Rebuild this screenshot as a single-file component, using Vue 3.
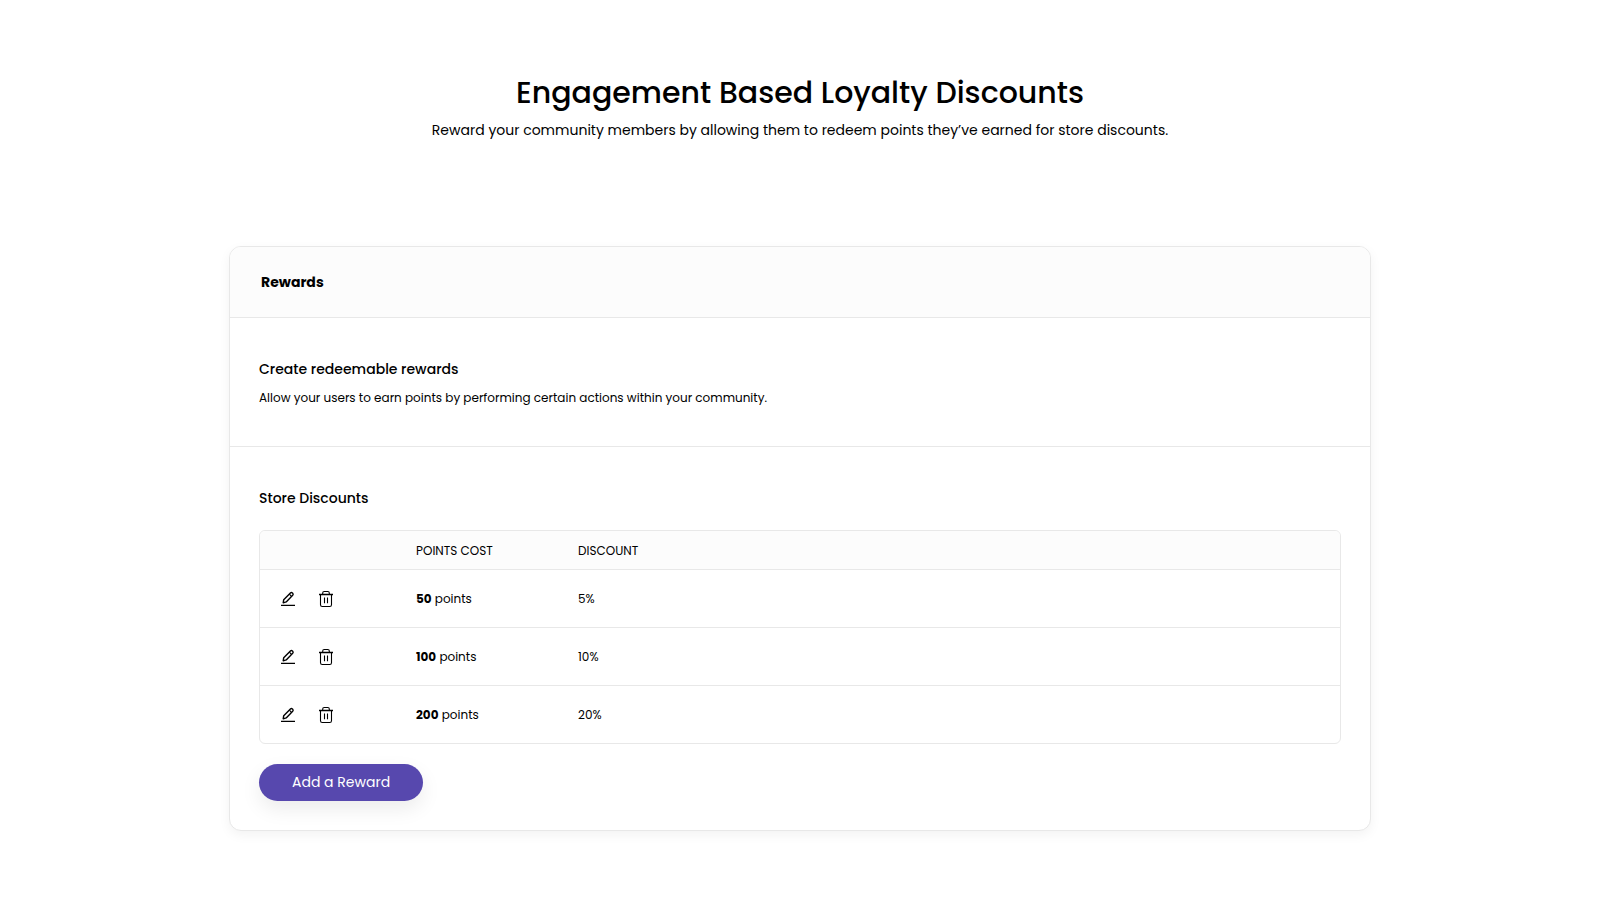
<template>
  <main class="page">
    <header class="intro">
      <h1>Engagement Based Loyalty Discounts</h1>
      <p>Reward your community members by allowing them to redeem points they’ve earned for store discounts.</p>
    </header>

    <section class="card">
      <div class="card-header">
        <h2>Rewards</h2>
      </div>

      <div class="card-section">
        <h3>Create redeemable rewards</h3>
        <p>Allow your users to earn points by performing certain actions within your community.</p>
      </div>

      <div class="card-section discounts">
        <h3>Store Discounts</h3>
        <div class="table-wrapper">
          <table>
            <thead>
              <tr>
                <th class="col-actions"></th>
                <th class="col-points">POINTS COST</th>
                <th>DISCOUNT</th>
              </tr>
            </thead>
            <tbody>
              <tr v-for="reward in rewards" :key="reward.id">
                <td class="actions-cell">
                  <div class="actions">
                    <button type="button" class="icon-button" aria-label="Edit reward" @click="editReward(reward)">
                      <svg width="16" height="18" viewBox="0 0 16 18" fill="none" stroke="currentColor">
                        <path d="M1 15.4H15" stroke-width="1.4" />
                        <path d="M3.2 12.9L3.7 9.7L10.4 3Q11.4 2.1 12.4 3L12.7 3.3Q13.6 4.3 12.7 5.3L6.2 11.9L3.2 12.9Z" stroke-width="1.4" stroke-linejoin="round" />
                        <path d="M9.4 4.2L11.5 6.3" stroke-width="1.1" />
                      </svg>
                    </button>
                    <button type="button" class="icon-button" aria-label="Delete reward" @click="removeReward(reward.id)">
                      <svg width="16" height="18" viewBox="0 0 16 18" fill="none" stroke="currentColor">
                        <path d="M1 4.5H15" stroke-width="1.3" />
                        <path d="M2.5 4.5V14.7Q2.5 16.5 4.3 16.5H11.7Q13.5 16.5 13.5 14.7V4.5M4.7 4.3V3Q4.7 1.5 6.2 1.5H9.8Q11.3 1.5 11.3 3V4.3" stroke-width="1.1" />
                        <path d="M6.5 7.5V13.2M9.5 7.5V13.2" stroke-width="1.1" />
                      </svg>
                    </button>
                  </div>
                </td>
                <td><strong>{{ reward.points }}</strong> points</td>
                <td>{{ reward.discount }}%</td>
              </tr>
            </tbody>
          </table>
        </div>
        <button type="button" class="add-button" @click="addReward">Add a Reward</button>
      </div>
    </section>
  </main>
</template>

<script setup>
import { ref } from 'vue';

const rewards = ref([
  { id: 1, points: 50, discount: 5 },
  { id: 2, points: 100, discount: 10 },
  { id: 3, points: 200, discount: 20 },
]);

const addReward = () => {
  const id = Date.now();
  rewards.value.push({ id, points: 50, discount: 5 });
};

const editReward = (reward) => {
  const points = Number(window.prompt('Points cost', reward.points));
  if (points > 0) {
    reward.points = points;
  }
};

const removeReward = (id) => {
  rewards.value = rewards.value.filter((reward) => reward.id !== id);
};
</script>

<style>
body {
  margin: 0;
  background: #fff;
}
</style>

<style scoped>
.page {
  box-sizing: border-box;
  max-width: 1190px;
  margin: 0 auto;
  padding: 73px 24px 64px;
  font-family: Poppins, Inter, sans-serif;
  color: #000;
}

h1,
h2,
h3,
p {
  margin: 0;
}

.intro {
  text-align: center;
  margin-bottom: 104px;
}

.intro h1 {
  font-size: 30px;
  line-height: 40px;
  font-weight: 500;
}

.intro p {
  margin-top: 5px;
  font-size: 14px;
  line-height: 24px;
}

.card {
  border: 1px solid #e8e8e8;
  border-radius: 12px;
  background: #fff;
  box-shadow: 0 4px 12px rgba(0, 0, 0, 0.05);
  overflow: hidden;
}

.card-header {
  padding: 23px 31px;
  background: #fcfcfc;
}

.card-header h2 {
  font-size: 14px;
  line-height: 24px;
  font-weight: 700;
}

.card-section {
  border-top: 1px solid #e8e8e8;
  padding: 39px 29px 38px;
}

.card-section h3 {
  font-size: 14px;
  line-height: 24px;
  font-weight: 500;
}

.card-section p {
  margin-top: 7px;
  font-size: 12px;
  line-height: 20px;
}

.discounts {
  padding-bottom: 29px;
}

.table-wrapper {
  margin: 20px 0;
  border: 1px solid #e8e8e8;
  border-radius: 6px;
  overflow: hidden;
}

table {
  width: 100%;
  border-collapse: separate;
  border-spacing: 0;
  table-layout: fixed;
  font-size: 12px;
  line-height: 20px;
}

th,
td {
  box-sizing: border-box;
  padding: 1px 0 0;
  text-align: left;
}

th {
  height: 38px;
  background: #fcfcfc;
  font-weight: 400;
}

td {
  height: 58px;
  border-top: 1px solid #e8e8e8;
}

.actions-cell {
  padding-top: 0;
}

.col-actions {
  width: 156px;
}

.col-points {
  width: 162px;
}

.actions {
  display: flex;
  gap: 22px;
  padding-left: 20px;
}

.icon-button {
  display: flex;
  padding: 0;
  border: 0;
  background: none;
  color: #000;
  cursor: pointer;
}

.add-button {
  display: block;
  height: 37px;
  padding: 0 33px 1px;
  border: 0;
  border-radius: 20px;
  background: #5748ae;
  box-shadow: 0 8px 20px rgba(0, 0, 0, 0.08);
  color: #fff;
  font-family: inherit;
  font-size: 14px;
  line-height: 24px;
  cursor: pointer;
}
</style>
